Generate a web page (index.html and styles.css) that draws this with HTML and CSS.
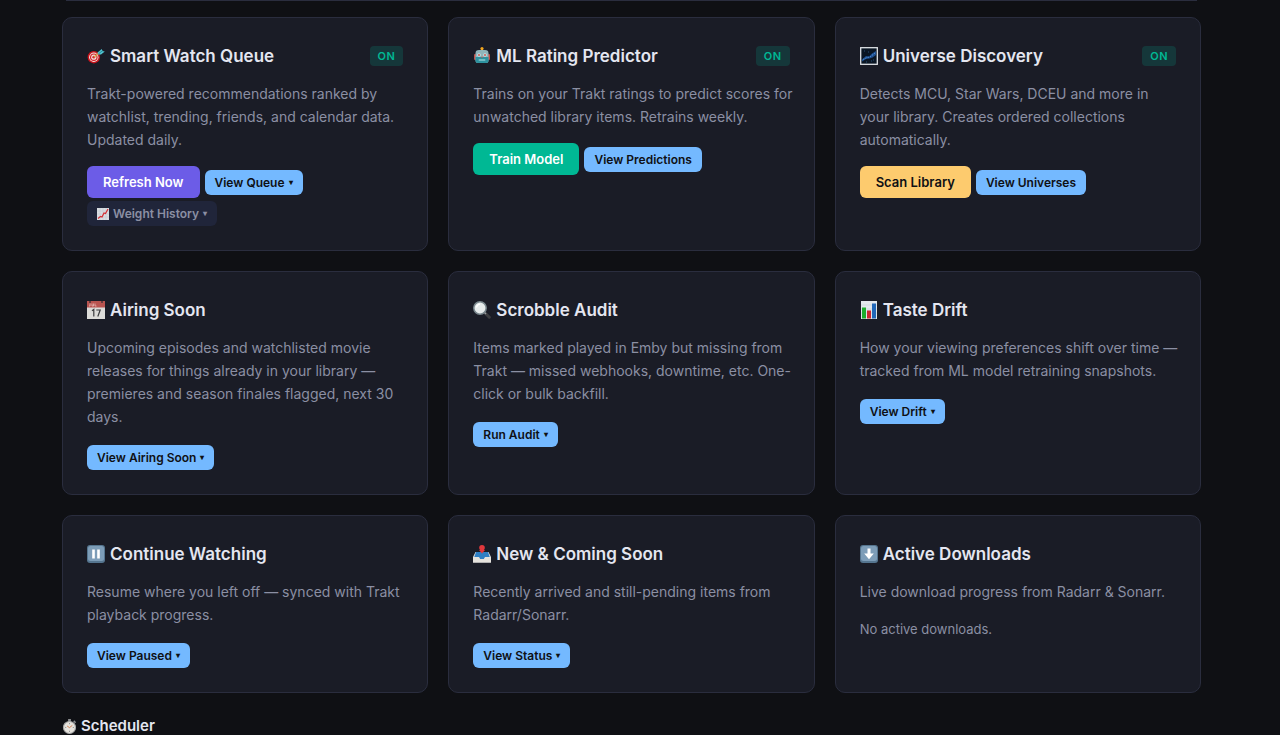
FILE: index.html
```html
<!DOCTYPE html>
<html lang="en">
<head>
    <meta charset="UTF-8">
    <meta name="viewport" content="width=device-width, initial-scale=1.0">
    <title>Dashboard</title>
    <link rel="stylesheet" href="styles.css">
</head>
<body>
    <main class="container">
        <div class="panel-end"></div>

        <div class="grid">
            <section class="card">
                <div class="card-header">
                    <h2>
                        <svg class="icon" viewBox="0 0 18 18" aria-hidden="true">
                            <circle cx="6.8" cy="10.2" r="6.2" fill="#c9141c"/>
                            <circle cx="6.8" cy="10.2" r="4.7" fill="#f3e4e2"/>
                            <circle cx="6.8" cy="10.2" r="3.8" fill="#d3222a"/>
                            <circle cx="6.8" cy="10.2" r="2.6" fill="#f3e4e2"/>
                            <circle cx="6.8" cy="10.2" r="1.4" fill="#d3222a"/>
                            <path d="M6.8 10.2L12.5 5.5" stroke="#d8a34a" stroke-width="1.4"/>
                            <path d="M10.5 5.6L14.8 2L15.3 4L17.8 4.4L14 7.4L11.2 7.5Z" fill="#4fc3cf"/>
                            <path d="M11.5 6.8L16 3.4" stroke="#23808e" stroke-width=".8"/>
                        </svg>
                        Smart Watch Queue
                    </h2>
                    <span class="badge">ON</span>
                </div>
                <p class="desc">Trakt-powered recommendations ranked by watchlist, trending, friends, and calendar data. Updated daily.</p>
                <div class="actions">
                    <button type="button" class="btn btn-primary">Refresh Now</button>
                    <button type="button" class="btn btn-sm btn-info">View Queue <span class="caret">▾</span></button>
                    <button type="button" class="btn btn-sm btn-muted">
                        <svg class="icon-sm" viewBox="0 0 12 12" aria-hidden="true">
                            <rect width="12" height="12" fill="#d9dde2"/>
                            <path d="M3 0V12M6 0V12M9 0V12M0 3H12M0 6H12M0 9H12" stroke="#bcc4cc" stroke-width=".5"/>
                            <path d="M1 10.5L3.5 8.5L5 9L7 5L8.5 5.5L11 1" fill="none" stroke="#d32f35" stroke-width="1.2"/>
                        </svg>
                        Weight History <span class="caret">▾</span>
                    </button>
                </div>
            </section>

            <section class="card">
                <div class="card-header">
                    <h2>
                        <svg class="icon" viewBox="0 0 18 18" aria-hidden="true">
                            <rect x="8" y="2" width="2" height="2" fill="#d9a43a"/>
                            <circle cx="9" cy="1.6" r="1.6" fill="#f2a51f"/>
                            <rect x="1" y="7" width="2.2" height="6" rx="1" fill="#c0504a"/>
                            <rect x="14.8" y="7" width="2.2" height="6" rx="1" fill="#c0504a"/>
                            <path d="M2.5 6.2Q2.5 3 6 3H12Q15.5 3 15.5 6.2V13.5Q15.5 16 13 16H5Q2.5 16 2.5 13.5Z" fill="#8fb4ba"/>
                            <path d="M2.5 10H15.5V13.5Q15.5 16 13 16H5Q2.5 16 2.5 13.5Z" fill="#2d929f"/>
                            <circle cx="6" cy="8" r="1.8" fill="#c9e3e7"/>
                            <circle cx="12" cy="8" r="1.8" fill="#c9e3e7"/>
                            <circle cx="6" cy="8" r=".9" fill="#cf4a40"/>
                            <circle cx="12" cy="8" r=".9" fill="#cf4a40"/>
                            <path d="M9 9L9.8 10.8H8.2Z" fill="#d9534a"/>
                            <rect x="5.5" y="12.3" width="7" height="1.4" rx=".7" fill="#8cc8cf"/>
                        </svg>
                        ML Rating Predictor
                    </h2>
                    <span class="badge">ON</span>
                </div>
                <p class="desc">Trains on your Trakt ratings to predict scores for unwatched library items. Retrains weekly.</p>
                <div class="actions">
                    <button type="button" class="btn btn-success">Train Model</button>
                    <button type="button" class="btn btn-sm btn-info">View Predictions</button>
                </div>
            </section>

            <section class="card">
                <div class="card-header">
                    <h2>
                        <svg class="icon" viewBox="0 0 18 18" aria-hidden="true">
                            <rect x=".7" y=".7" width="16.6" height="16.6" fill="#0a1624" stroke="#dfe2e6" stroke-width="1.3"/>
                            <path d="M2 12.5L6 9L9 9.5L12 6.5L16 4V8L12.5 10.5L9.5 11.5L6 12L2 14.5Z" fill="#1e4f91"/>
                            <path d="M3 12.5L7 10.5L10 10L15 6" fill="none" stroke="#4d8ccc" stroke-width="1" stroke-dasharray="1.5 1"/>
                            <path d="M4 4h1M8 5h1M13 13h1M6 15h1M11 14h1" stroke="#34608f" stroke-width=".8"/>
                        </svg>
                        Universe Discovery
                    </h2>
                    <span class="badge">ON</span>
                </div>
                <p class="desc">Detects MCU, Star Wars, DCEU and more in your library. Creates ordered collections automatically.</p>
                <div class="actions">
                    <button type="button" class="btn btn-warning">Scan Library</button>
                    <button type="button" class="btn btn-sm btn-info">View Universes</button>
                </div>
            </section>

            <section class="card">
                <div class="card-header">
                    <h2>
                        <svg class="icon" viewBox="0 0 18 18" aria-hidden="true">
                            <rect x="0" y="0" width="18" height="18" fill="#dcdbd8"/>
                            <rect x="0" y="0" width="18" height="6.5" fill="#b95450"/>
                            <path d="M3 2.5v2.5h-1M5 2.5v2.5h1.5V2.5M8 2.5v2.5h1.5" fill="none" stroke="#eec6c2" stroke-width=".7"/>
                            <circle cx="3" cy="1" r="1" fill="#4b3536"/>
                            <circle cx="15" cy="1" r="1" fill="#4b3536"/>
                            <path d="M5 9.8L6.8 8.5V15.5M9.3 9H13.2L10.8 15.5" fill="none" stroke="#3b3b3d" stroke-width="1.2"/>
                        </svg>
                        Airing Soon
                    </h2>
                </div>
                <p class="desc">Upcoming episodes and watchlisted movie releases for things already in your library — premieres and season finales flagged, next 30 days.</p>
                <div class="actions">
                    <button type="button" class="btn btn-sm btn-info">View Airing Soon <span class="caret">▾</span></button>
                </div>
            </section>

            <section class="card">
                <div class="card-header">
                    <h2>
                        <svg class="icon" viewBox="0 0 18 18" aria-hidden="true">
                            <path d="M11.3 11.3L16.3 16.2" stroke="#3c3d40" stroke-width="3" stroke-linecap="round"/>
                            <path d="M11 11L13 13" stroke="#9a9da0" stroke-width="1.4"/>
                            <circle cx="7" cy="7" r="6.2" fill="#e6ebeb" stroke="#78868c" stroke-width="1.5"/>
                            <path d="M3.5 6.5A4 4 0 0 1 7 3.2" fill="none" stroke="#fff" stroke-width="1.3"/>
                        </svg>
                        Scrobble Audit
                    </h2>
                </div>
                <p class="desc">Items marked played in Emby but missing from Trakt — missed webhooks, downtime, etc. One-click or bulk backfill.</p>
                <div class="actions">
                    <button type="button" class="btn btn-sm btn-info">Run Audit <span class="caret">▾</span></button>
                </div>
            </section>

            <section class="card">
                <div class="card-header">
                    <h2>
                        <svg class="icon" viewBox="0 0 18 18" aria-hidden="true">
                            <rect x="1" y="0" width="16" height="18" fill="#e2e7ec"/>
                            <path d="M1 4H17M1 8H17M1 12H17" stroke="#c7d0d8" stroke-width=".6"/>
                            <rect x="2" y="6.5" width="4" height="11" fill="#1cac2c"/>
                            <rect x="7" y="9.5" width="4" height="8" fill="#cc2630"/>
                            <rect x="12" y="2.5" width="4" height="15" fill="#2167b8"/>
                        </svg>
                        Taste Drift
                    </h2>
                </div>
                <p class="desc">How your viewing preferences shift over time — tracked from ML model retraining snapshots.</p>
                <div class="actions">
                    <button type="button" class="btn btn-sm btn-info">View Drift <span class="caret">▾</span></button>
                </div>
            </section>

            <section class="card">
                <div class="card-header">
                    <h2>
                        <svg class="icon" viewBox="0 0 18 18" aria-hidden="true">
                            <rect x="0" y="0" width="18" height="18" rx="3" fill="#55758f"/>
                            <rect x="1" y="1" width="16" height="15" rx="2.5" fill="#7d9db8"/>
                            <rect x="5.2" y="4.5" width="2.6" height="9" fill="#fff"/>
                            <rect x="10.2" y="4.5" width="2.6" height="9" fill="#fff"/>
                        </svg>
                        Continue Watching
                    </h2>
                </div>
                <p class="desc">Resume where you left off — synced with Trakt playback progress.</p>
                <div class="actions">
                    <button type="button" class="btn btn-sm btn-info">View Paused <span class="caret">▾</span></button>
                </div>
            </section>

            <section class="card">
                <div class="card-header">
                    <h2>
                        <svg class="icon" viewBox="0 0 18 18" aria-hidden="true">
                            <path d="M2.5 7H15.5L18 12V17.5H0V12Z" fill="#d9dcdf"/>
                            <path d="M3 7H15L16.7 12H12L11 14H7L6 12H1.3Z" fill="#2f7fc4"/>
                            <path d="M0 12H5.8L7 14.3H11L12.2 12H18V17.5H0Z" fill="#e5e2dc"/>
                            <path d="M9 8.5L6 5H7.8V1H10.2V5H12Z" fill="#e0383c"/>
                            <circle cx="9" cy="2.8" r="2.8" fill="#e0383c"/>
                        </svg>
                        New &amp; Coming Soon
                    </h2>
                </div>
                <p class="desc">Recently arrived and still-pending items from Radarr/Sonarr.</p>
                <div class="actions">
                    <button type="button" class="btn btn-sm btn-info">View Status <span class="caret">▾</span></button>
                </div>
            </section>

            <section class="card">
                <div class="card-header">
                    <h2>
                        <svg class="icon" viewBox="0 0 18 18" aria-hidden="true">
                            <rect x="0" y="0" width="18" height="18" rx="3" fill="#55758f"/>
                            <rect x="1" y="1" width="16" height="15" rx="2.5" fill="#7d9db8"/>
                            <path d="M7.5 3.5H10.5V8.5H13.8L9 14.3L4.2 8.5H7.5Z" fill="#fff"/>
                        </svg>
                        Active Downloads
                    </h2>
                </div>
                <p class="desc">Live download progress from Radarr &amp; Sonarr.</p>
                <p class="empty">No active downloads.</p>
            </section>
        </div>

        <h3 class="section-title">
            <svg class="icon-md" viewBox="0 0 16 16" aria-hidden="true">
                <rect x="6.5" y="0" width="3" height="3" fill="#8b8d90"/>
                <path d="M12.5 2L14.5 4" stroke="#8b8d90" stroke-width="1.6"/>
                <circle cx="8" cy="9" r="6.4" fill="#e6e3dd" stroke="#a9a9a8" stroke-width="1.2"/>
                <path d="M8 4.2V5.5M8 12.5V13.8M3.3 9H4.5M11.5 9H12.7" stroke="#77787a" stroke-width=".8"/>
                <path d="M8 9.2L11 6.8M8 9.2L5.5 7.5" stroke="#d0703c" stroke-width=".9"/>
            </svg>
            Scheduler
        </h3>
    </main>
</body>
</html>
```
FILE: styles.css
```css
* {
    box-sizing: border-box;
    margin: 0;
    padding: 0;
}

body {
    font-family: Inter, "Liberation Sans", sans-serif;
    background-color: #0f1014;
    color: #e4e6f0;
}

.container {
    padding: 0 79px 0 62px;
}

/* Bottom edge of the panel above the grid */
.panel-end {
    margin: 0 4px 16px;
    border-bottom: 1px solid #2a2d3e;
}

.grid {
    display: grid;
    grid-template-columns: repeat(3, 1fr);
    gap: 20px;
}

.card {
    padding: 24px;
    background-color: #1a1c26;
    border: 1px solid #2a2d3e;
    border-radius: 10px;
}

.card-header {
    display: flex;
    justify-content: space-between;
    align-items: center;
    margin-bottom: 12px;
}

h2 {
    display: flex;
    align-items: center;
    gap: 5px;
    font-size: 17px;
    font-weight: 600;
    line-height: 28px;
}

.icon {
    width: 18px;
    height: 18px;
}

.icon-md {
    width: 15px;
    height: 15px;
}

.icon-sm {
    width: 12px;
    height: 12px;
}

.badge {
    padding: 0 8px;
    background-color: rgba(0, 184, 148, 0.18);
    color: #00b894;
    border-radius: 4px;
    font-size: 11px;
    font-weight: 600;
    line-height: 20px;
    letter-spacing: 0.5px;
}

.desc {
    margin-right: -6px;
    color: #8b8fa3;
    font-size: 14px;
    line-height: 23px;
}

.empty {
    margin-top: 16px;
    color: #8b8fa3;
    font-size: 13px;
    line-height: 20px;
}

.actions {
    display: flex;
    flex-wrap: wrap;
    align-items: center;
    align-content: flex-end;
    gap: 3px 5px;
    min-height: 27px;
    margin-top: 15px;
}

.btn {
    display: inline-flex;
    align-items: center;
    gap: 4px;
    padding: 0 16px;
    border: none;
    border-radius: 6px;
    font-family: inherit;
    font-size: 13px;
    font-weight: 600;
    line-height: 32px;
    color: #0f1014;
    cursor: pointer;
}

.btn:hover {
    opacity: 0.9;
}

.btn-sm {
    padding: 0 10px;
    font-size: 12px;
    line-height: 25px;
}

.btn-primary {
    background-color: #6c5ce7;
    color: #fff;
}

.btn-success {
    background-color: #00b894;
    color: #fff;
}

.btn-warning {
    background-color: #fdcb6e;
}

.btn-info {
    background-color: #74b9ff;
}

.btn-muted {
    background-color: #20253a;
    color: #8b8fa3;
}

.caret {
    font-size: 8px;
}

.section-title {
    display: flex;
    align-items: center;
    gap: 4px;
    margin-top: 23px;
    font-size: 15px;
    font-weight: 600;
    line-height: 20px;
}
```
